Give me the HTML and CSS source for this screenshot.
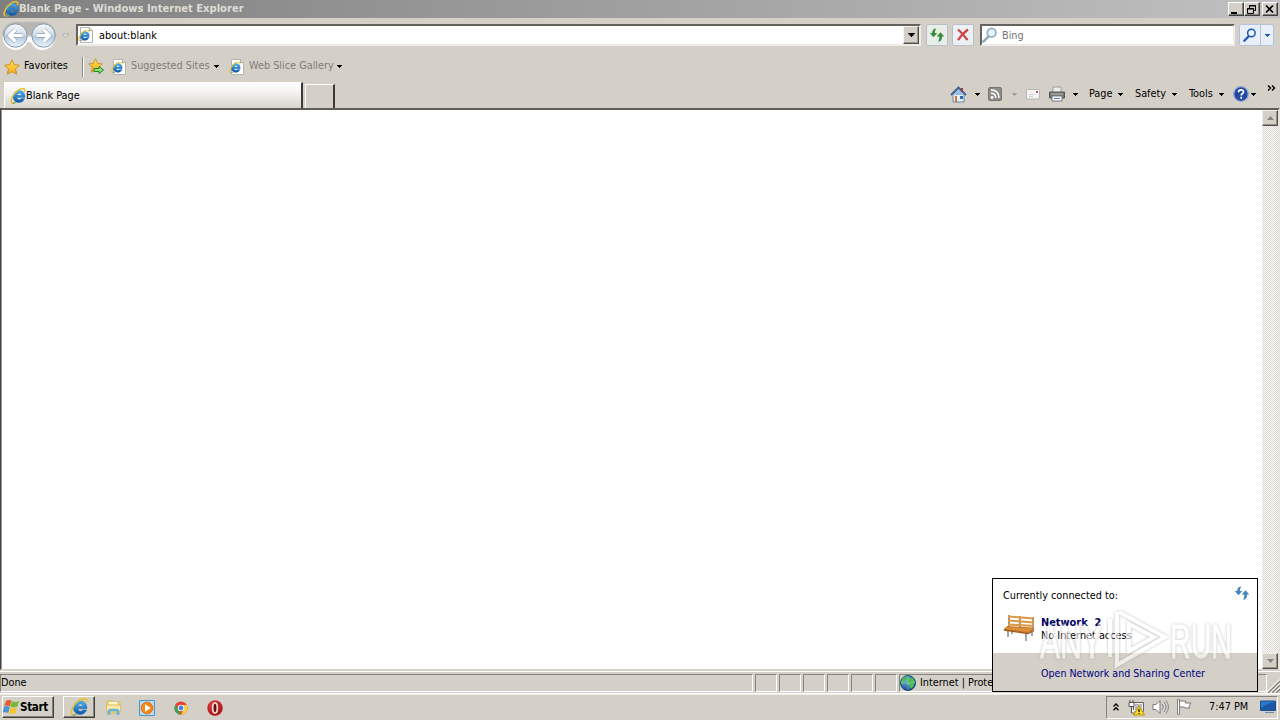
FILE: index.html
```html
<!DOCTYPE html>
<html lang="en">
<head>
<meta charset="utf-8">
<title>Blank Page - Windows Internet Explorer</title>
<link rel="stylesheet" href="styles.css">
</head>
<body>
<svg class="defs" width="0" height="0">
  <defs>
    <linearGradient id="blue" x1="0" y1="0" x2="0" y2="1"><stop offset="0" stop-color="#4bb4f2"/><stop offset="1" stop-color="#0b55b0"/></linearGradient>
    <linearGradient id="orb" x1="0" y1="0" x2="0" y2="1"><stop offset="0" stop-color="#f4f7fa"/><stop offset=".48" stop-color="#d3dde6"/><stop offset=".52" stop-color="#b3c8da"/><stop offset="1" stop-color="#e8f6ff"/></linearGradient>
    <linearGradient id="gold" x1="0" y1="0" x2="0" y2="1"><stop offset="0" stop-color="#ffe95a"/><stop offset="1" stop-color="#f9a51c"/></linearGradient>
    <radialGradient id="red" cx=".4" cy=".3" r=".8"><stop offset="0" stop-color="#e34a48"/><stop offset="1" stop-color="#9d0508"/></radialGradient>
    <radialGradient id="world" cx=".4" cy=".3" r=".8"><stop offset="0" stop-color="#6fb9ee"/><stop offset="1" stop-color="#0b3a86"/></radialGradient>
  </defs>
  <symbol id="ie" viewBox="0 0 16 16">
    <path d="M9.300 2.600c4 0 6.200 3.300 5.700 7H6.900c.2 1.500 1.200 2.100 2.400 2.100 1 0 1.700-.4 2.200-1.100h3.200c-.9 2.600-3 4-5.700 4-3.600 0-5.900-2.500-5.900-5.900 0-3.600 2.600-6.100 6.200-6.100zM7 7.300h4.600c-.1-1.200-1-2-2.300-2-1.200 0-2.100.8-2.300 2z" fill="url(#blue)" fill-rule="evenodd" stroke="#0d4d96" stroke-width=".3"/>
    <path d="M2.300 15C-.600 13.500 2.500 6 7.500 2.600c3-2.100 6.200-2.500 7-1.300.5.800.3 1.700-.2 2.800" fill="none" stroke="#e6c22f" stroke-width="1.500"/>
    <path d="M2.300 15c1 .5 2.500 0 3.800-1.200" fill="none" stroke="#7fa458" stroke-width="1.300"/>
  </symbol>
  <symbol id="iepage" viewBox="0 0 16 16">
    <path d="M2.500.5h9l3 3v12h-12z" fill="#fff" stroke="#b5b3b0"/><path d="M11.500.5v3h3" fill="#ddd" stroke="#a9a9a9"/>
    <svg x="0" y="2.500" width="12" height="12"><use href="#ie"/></svg>
  </symbol>
  <symbol id="star" viewBox="0 0 16 16"><path d="M8 .8l2.200 4.900 5.200.6-3.900 3.600 1.100 5.300L8 12.600l-4.600 2.600 1.100-5.300L.6 6.300l5.200-.6z" fill="url(#gold)" stroke="#c98a1c" stroke-width=".9"/></symbol>
  <symbol id="swap" viewBox="0 0 16 16"><path d="M7.500 1.500C4.500 1.500 3 3.500 3.200 6H.8l3.700 4.200L8.300 6H6c-.2-1.800.2-3 1.500-4.500zM9 15c3-.5 4.300-2.500 4-5.500h2.300L11.500 5.300 7.700 9.500h2.500c.2 2-.1 3.800-1.200 5.500z" fill="currentColor"/></symbol>
  <symbol id="glass" viewBox="0 0 16 16"><path d="M6.500 9.500L1.500 14.500" stroke="currentColor" stroke-width="2.600" stroke-linecap="round"/><circle cx="9.600" cy="5.700" r="4.300" fill="#e8f3fc" stroke="currentColor" stroke-width="1.700"/></symbol>
  <symbol id="down" viewBox="0 0 5 3"><path d="M0 0h5v1H4v1H3v1H2V2H1V1H0z" fill="currentColor"/></symbol>
</svg>

<div class="screen">
  <header class="title">
    <svg class="i16"><use href="#ie"/></svg><span class="cap">Blank Page - Windows Internet Explorer</span>
    <button class="wb"><svg width="14" height="11"><path d="M2 9h6" stroke="#000" stroke-width="2"/></svg></button>
    <button class="wb"><svg width="14" height="11"><path d="M4.500 4V1.500h6v5H9M4 2h7" fill="none" stroke="#000"/><path d="M2.500 4.500h6v5h-6zM2 5h7" fill="none" stroke="#000"/></svg></button>
    <button class="wb close"><svg width="14" height="11"><path d="M3 1.500l7 7M10 1.500l-7 7" stroke="#000" stroke-width="1.700"/></svg></button>
  </header>

  <nav class="address">
    <svg class="orbs" width="72" height="32" viewBox="0 0 72 32">
      <path d="M15 3h28a13.500 13.500 0 0 1 13 13H2A13.500 13.500 0 0 1 15 3z" fill="#b9b7b4"/>
      <path d="M2.500 18a13 13 0 0 0 25 5h3a13 13 0 0 0 25-5z" fill="#fff"/>
      <g fill="url(#orb)" stroke="#8898a8"><circle cx="15.500" cy="16.500" r="11.700"/><circle cx="43.500" cy="16.500" r="11.700"/></g>
      <path d="M15.500 10.500l-6 6 6 6M10 16.500h12.500M43.500 10.500l6 6-6 6M49 16.500H36.500" fill="none" stroke="#8ca3b8" stroke-width="4.400"/>
      <path d="M15.500 10.500l-6 6 6 6M10 16.500h12.500M43.500 10.500l6 6-6 6M49 16.500H36.500" fill="none" stroke="#fff" stroke-width="3.200"/>
      <path d="M62 15h7l-3.500 3.500z" fill="#e4e2dd" stroke="#aaa69e" stroke-width=".8"/>
    </svg>
    <div class="url"><svg class="i16"><use href="#iepage"/></svg><span class="t" style="width:58px">about:blank</span><span class="combo"><svg width="7" height="4"><use href="#down"/></svg></span></div>
    <button class="soft green"><svg class="i16"><use href="#swap"/></svg></button>
    <button class="soft stop"><svg width="14" height="14"><path d="M2 1.500Q6 5 11.500 12M12 1.500Q7 5 2 12" fill="none" stroke="#c9434a" stroke-width="2.200"/></svg></button>
    <div class="search"><svg class="i16"><use href="#glass"/></svg><span>Bing</span></div>
    <div class="go"><span><svg width="14" height="14"><use href="#glass"/></svg></span><span><svg width="5" height="3"><use href="#down"/></svg></span></div>
  </nav>

  <nav class="favs">
    <svg class="i16"><use href="#star"/></svg><span class="t favorites">Favorites</span>
    <i class="rule"></i>
    <svg class="addfav" width="17" height="17" viewBox="0 0 17 17"><svg width="15" height="15"><use href="#star"/></svg><path d="M6 10.500h5V8.500l4.500 3.500-4.500 3.500v-2H6z" fill="#8be070" stroke="#258323"/></svg>
    <svg class="i16 site"><use href="#iepage"/></svg><span class="t dim suggested">Suggested Sites</span><svg class="dn"><use href="#down"/></svg>
    <svg class="i16 slice"><use href="#iepage"/></svg><span class="t dim gallery">Web Slice Gallery</span><svg class="dn"><use href="#down"/></svg>
  </nav>

  <div class="tabs">
    <div class="tab"><svg class="i16"><use href="#ie"/></svg><span>Blank Page</span></div><div class="newtab"></div>
    <div class="commands">
      <svg width="17" height="17" viewBox="0 0 17 17"><path d="M3 8h11v8H3z" fill="#e6eff8" stroke="#6b84a5"/><path d="M1 9l7.500-7.500L16 9" fill="#9bc0e3" stroke="#3d6190" stroke-width="1.800"/><path d="M12 2v4" stroke="#944" stroke-width="2"/><path d="M5 10h2v6H5z" fill="#c67938"/><path d="M10 10h3v3h-3z" fill="#2a69ae"/></svg>
      <svg class="dn c1"><use href="#down"/></svg>
      <svg class="feed" width="14" height="14" viewBox="0 0 14 14"><rect x=".5" y=".5" width="13" height="13" rx="1.500" fill="#8e8d8a" stroke="#77736e"/><circle cx="4" cy="10.500" r="1.400" fill="#fff"/><path d="M3 6.300q4.700 0 4.700 4.700M3 3q8 0 8 8" fill="none" stroke="#fff" stroke-width="1.500"/></svg>
      <svg class="dn c2"><use href="#down"/></svg>
      <svg class="mail" width="14" height="11" viewBox="0 0 14 11"><path d="M.5.500h13v9.500H.5z" fill="#f5f4f4" stroke="#bab6b2"/><path d="M10 2h2v2h-2z" fill="#cf4d68"/><path d="M3 5.500h5M3 7.500h4" stroke="#d3d0d2"/></svg>
      <svg class="print" width="16" height="16" viewBox="0 0 16 16"><path d="M4 1h8v6H4z" fill="#eee" stroke="#999"/><path d="M.5 6h15v6h-15z" fill="#777" stroke="#555"/><path d="M2 8h12" stroke="#bbb"/><path d="M3 10h10v5H3z" fill="#fff" stroke="#777"/><path d="M5 12.500h6" stroke="#4a79c2"/></svg>
      <svg class="dn c3"><use href="#down"/></svg>
      <span class="t page">Page</span><svg class="dn"><use href="#down"/></svg>
      <span class="t safety">Safety</span><svg class="dn"><use href="#down"/></svg>
      <span class="t tools">Tools</span><svg class="dn"><use href="#down"/></svg>
      <svg class="help" width="16" height="16" viewBox="0 0 16 16"><circle cx="8" cy="8" r="7.300" fill="#2449a4" stroke="#8fa8d1" stroke-width="1.300"/><path d="M5.500 6.200C5.500 3 10.700 3.100 10.500 6c-.1 1.500-2.300 1.600-2.300 3.600M8.200 10.700v2" fill="none" stroke="#fff" stroke-width="1.700"/></svg>
      <svg class="dn c4"><use href="#down"/></svg>
      <svg class="more" width="9" height="7"><path d="M1 .5l2.500 2.500L1 5.500M5 .5l2.500 2.500L5 5.500" fill="none" stroke="#000" stroke-width="1.400"/></svg>
    </div>
  </div>

  <main class="view"><div class="scroll"><button><svg width="7" height="4" viewBox="0 0 7 4"><path d="M0 4l3.500-4L7 4z" fill="#85817b"/></svg></button><button><svg width="7" height="4" viewBox="0 0 7 4"><path d="M0 0h7L3.500 4z" fill="#85817b"/></svg></button></div></main>

  <div class="status">
    <div class="pane done">Done</div><div class="pane"></div><div class="pane"></div><div class="pane"></div><div class="pane"></div><div class="pane"></div><div class="pane"></div>
    <div class="pane zone"><svg width="16" height="16" viewBox="0 0 16 16"><circle cx="8" cy="8" r="7.500" fill="url(#world)" stroke="#174b76"/><path d="M2 4q3-4 6-2l-1 3-3 2-1 3-2-1zM9 3l4 0 2 4-2 5-3 2-1-4-2-2 1-3z" fill="#50ba57"/><path d="M8 1v14M1 7q7 3 14 0" fill="none" stroke="#aee0d5" stroke-width=".7" opacity=".6"/></svg><span>Internet | Protected Mode: On</span></div>
    <svg class="grip" width="14" height="14"><path d="M1 14L14 1M5 14l9-9M9 14l5-5" stroke="#fff" stroke-width="2"/><path d="M2 14L14 2M6 14l8-8M10 14l4-4" stroke="#817d77" stroke-width="1.500"/></svg>
  </div>

  <footer class="taskbar">
    <button class="start"><svg width="17" height="16" viewBox="0 0 17 16"><path d="M3 2q3-2 5.500-.3L7 7.300Q4 5.800 1.300 7z" fill="#e65c28"/><path d="M9 2Q12 4 16 2l-1.600 5.500Q11 9 7.500 7.500z" fill="#77b73b"/><path d="M1 7.700q3-1.400 5.800.3L5.200 14Q2.500 12.400-.5 13.800z" fill="#4c94d8"/><path d="M7.400 8.300q3 1.600 6.600.2l-1.500 5.400Q9 16 5.800 14.300z" fill="#f5c431"/></svg><span>Start</span></button>
    <button class="task"><svg width="18" height="18"><use href="#ie"/></svg></button>
    <svg class="folder" width="17" height="17" viewBox="0 0 17 17"><path d="M2 2h6l1 1h6v11H2z" fill="#f4d473" stroke="#d8bb66"/><path d="M4 3h8v3H4z" fill="#fff7d6"/><path d="M1.500 6h14v6h-14z" fill="#ffe99c" stroke="#d9bd6c"/><path d="M4 16v-3.500q0-1.500 1.500-1.500h6q1.500 0 1.500 1.500V16" fill="none" stroke="#61b5df" stroke-width="2.500"/></svg>
    <svg class="media" width="16" height="16" viewBox="0 0 16 16"><path d="M.5.500h15v15H.5z" fill="#b8dcf1" stroke="#5095c4"/><circle cx="8" cy="8" r="5.800" fill="#f58a19" stroke="#e36f10"/><path d="M6 4.200l5.500 3.800L6 11.800z" fill="#fff"/></svg>
    <svg class="chrome" width="14" height="14" viewBox="0 0 16 16"><circle cx="8" cy="8" r="7.500" fill="#e64233"/><path d="M1.500 4.300L8 15.500A7.500 7.500 0 0 1 1.500 4.300z" fill="#34a853"/><path d="M8 4.500h6.600A7.500 7.500 0 0 1 8 15.500l3-5.500z" fill="#fbd034"/><circle cx="8" cy="8" r="3.700" fill="#fff"/><circle cx="8" cy="8" r="2.800" fill="#4285de"/></svg>
    <svg class="opera" width="16" height="16" viewBox="0 0 16 16"><circle cx="8" cy="8" r="7.700" fill="url(#red)"/><ellipse cx="8" cy="8" rx="2.300" ry="5" fill="#6c0b0c" stroke="#f2dede" stroke-width="1.700"/></svg>
    <div class="tray">
      <svg class="chev" width="6" height="8"><path d="M.5 3.500L3 1l2.500 2.500M.5 7.200L3 4.700l2.500 2.500" fill="none" stroke="#000" stroke-width="1.300"/></svg>
      <svg class="net" width="17" height="17" viewBox="0 0 17 17"><path d="M5.500 3.500h10v9h-10z" fill="#eee" stroke="#666"/><path d="M7 5h7v6H7z" fill="#bbb"/><path d="M1 3.500h5v4H1zM2 1v2M5 1v2M3.500 8v6h4" fill="#fff" stroke="#555"/><path d="M11 7l5.500 9h-11z" fill="#ffdb29" stroke="#ba9200"/><path d="M11 10v3M11 14v1" stroke="#000" stroke-width="1.200"/></svg>
      <svg class="sound" width="17" height="16" viewBox="0 0 17 16"><path d="M1 5.500h3l4-4v13l-4-4H1z" fill="#fff" stroke="#777"/><path d="M10 5q2.500 3 0 6M12 3q4 5 0 10M14 1.500q5 6.500 0 13" fill="none" stroke="#888"/></svg>
      <svg class="flag" width="17" height="16" viewBox="0 0 17 16"><path d="M1.500.5h2v15h-2z" fill="#fff" stroke="#777" stroke-width=".9"/><path d="M3.500 2h6v2H15l-2 3.500 1 1.500H9L8 8H3.500z" fill="#fff" stroke="#777"/></svg>
      <span class="clock">7:47 PM</span>
      <svg class="desktop" width="16" height="14" viewBox="0 0 16 14"><path d="M.5 1h15v9.500H.5z" fill="#2c79c8" stroke="#175092"/><path d="M1 8Q8 3 15 2v8H1z" fill="#1c57a5"/><path d="M5 12.500h9" stroke="#6b8aad"/></svg>
    </div>
  </footer>

  <aside class="popup">
    <div class="white"><span class="connected">Currently connected to:</span><svg class="refresh" width="16" height="16"><use href="#swap"/></svg>
      <div class="network"><svg width="34" height="30" viewBox="0 0 34 30"><path d="M5 17v6M23 20v7M9 16v4M29 17v5" stroke="#8b9296" stroke-width="1.600"/><path d="M6 1v14M30 3v13M17 2v12" stroke="#8b5e2b" stroke-width="1.300"/><path d="M5 2.500l26 2M5 6.500l26 2M5 10.500l26 1.500" stroke="#dc9a4b" stroke-width="2.200"/><path d="M4 12.500l25 1.500 2 1.500-6 3-24-3z" fill="#dd9134" stroke="#a96420" stroke-width=".8"/><path d="M1 16l24 3.500 6-3" fill="none" stroke="#a15919" stroke-width="1.300"/></svg><div><b>Network&nbsp; 2</b><span>No Internet access</span></div></div>
    </div>
    <a class="center">Open Network and Sharing Center</a>
    <svg class="watermark" width="212" height="66" viewBox="0 0 212 66">
      <g class="ghost"><text x="6" y="51" textLength="62" lengthAdjust="spacingAndGlyphs">ANY</text><text x="136" y="51" textLength="62" lengthAdjust="spacingAndGlyphs">RUN</text>
      <path d="M76 12v38M85 5l46 25-48 28V5M95 17v27l25-14z"/></g>
    </svg>
  </aside>
</div>
</body>
</html>
```
FILE: styles.css
```css
* { box-sizing: border-box; }
body { margin: 0; background: #d4d0c8; color: #000; font: 10.8px/14px "DejaVu Sans Condensed", "DejaVu Sans", sans-serif; overflow: hidden; }
svg { display: block; flex: none; }
button { font: inherit; padding: 0; margin: 0; color: #000; }
.defs { position: absolute; }
.screen { position: relative; width: 1280px; height: 720px; display: flex; flex-direction: column; background: #d4d0c8; }
.i16 { width: 16px; height: 16px; }
.t { flex: none; white-space: nowrap; }
.dn { width: 5px; height: 3px; }
.title { height: 18px; flex: none; display: flex; align-items: center; padding: 0 2px 0 3px; background: linear-gradient(90deg, #808080, #c0c0c0); }
.cap { flex: 1; color: #dedbd5; font-weight: bold; font-size: 11.1px; white-space: nowrap; }
.wb { width: 16px; height: 14px; background: #d4d0c8; border: 1px solid; border-color: #fff #404040 #404040 #fff; box-shadow: inset -1px -1px #808080; }
.close { margin-left: 2px; }
.address { height: 35px; flex: none; display: flex; align-items: flex-start; }
.orbs { margin-top: 1px; }
.url { margin: 6px 0 0 4px; width: 845px; height: 22px; display: flex; align-items: center; background: #fff; border: 2px solid; border-color: #65625e #eeece7 #eeece7 #65625e; }
.url .t { margin: 1px 0 0 5px; }
.combo { width: 16px; height: 18px; margin-left: auto; display: flex; align-items: center; justify-content: center; background: #d4d0c8; border: 1px solid; border-color: #f4f2ee #504d49 #504d49 #f4f2ee; box-shadow: inset -1px -1px #99958f; }
.soft { width: 22px; height: 22px; margin: 6px 0 0 5px; border: 1px solid #b8bfcb; border-radius: 2px; background: #eceff3; display: flex; align-items: center; justify-content: center; }
.soft + .soft { margin-left: 4px; }
.green { color: #3b8c3e; background: #e7efe8; }
.search { width: 255px; height: 22px; margin: 6px 0 0 6px; display: flex; align-items: center; background: #fff; border: 2px solid; border-color: #65625e #eeece7 #eeece7 #65625e; color: #94adbd; }
.search span { color: #76736f; margin: 1px 0 0 4px; }
.go { width: 35px; height: 22px; display: flex; margin: 6px 0 0 4px; border: 1px solid #b5c3da; border-radius: 2px; background: #e9eff8; color: #1e58b4; }
.go span { display: flex; align-items: center; justify-content: center; width: 20px; }
.go span + span { width: 13px; border-left: 1px solid #b5c3da; }
.favs { height: 27px; flex: none; display: flex; align-items: center; padding-left: 4px; }
.favs .t { margin-top: -1px; }
.favorites { width: 46px; margin-left: 4px; }
.rule { width: 2px; height: 20px; margin: 0 5px 0 12px; border-left: 1px solid #8b8882; border-right: 1px solid #fff; }
.addfav { margin-left: -1px; }
.site { margin-left: 6px; }
.dim { color: #817d78; }
.suggested { width: 79px; margin-left: 4px; }
.suggested + .dn { margin-left: 4px; }
.slice { margin-left: 10px; }
.gallery { width: 83px; margin-left: 4px; }
.gallery + .dn { margin-left: 5px; }
.tabs { height: 28px; flex: none; display: flex; align-items: flex-end; padding-left: 4px; }
.tab { width: 299px; height: 26px; display: flex; align-items: center; padding: 1px 0 0 5px; border: 1px solid #fff; border-right: 2px solid #3c3b39; border-bottom: 0; background: linear-gradient(#fff, #f2f1ef 40%, #d8d4cd); }
.tab span { margin-left: 0; }
.newtab { width: 30px; height: 24px; margin-left: 2px; border-left: 1px solid #fff; border-top: 1px solid #fff; border-right: 2px solid #3c3b39; }
.commands { height: 28px; width: 330px; margin: 0 0 0 auto; display: flex; align-items: center; }
.c1 { margin-left: 8px; }
.feed { margin-left: 8px; }
.c2 { margin-left: 10px; color: #a5a099; }
.mail { margin-left: 9px; }
.print { margin-left: 9px; }
.c3 { margin-left: 8px; }
.page { width: 24px; margin-left: 11px; }
.page + .dn { margin-left: 5px; }
.safety { width: 33px; margin-left: 12px; }
.safety + .dn { margin-left: 4px; }
.tools { width: 26px; margin-left: 12px; }
.tools + .dn { margin-left: 4px; }
.help { margin-left: 9px; }
.c4 { margin-left: 2px; }
.more { align-self: flex-start; margin: 5px 0 0 11px; }
.view { height: 562px; flex: none; background: #fff; border: solid; border-width: 2px 2px 1px 1px; border-color: #605d59 #e8e5df #d4d0c8 #45423f; box-shadow: inset 1px 0 #9a9792; display: flex; justify-content: flex-end; padding-left: 1px; }
.scroll { width: 16px; display: flex; flex-direction: column; justify-content: space-between; background: repeating-conic-gradient(#fff 0% 25%, #d9d5ce 0% 50%) 0 0 / 2px 2px; }
.scroll button { width: 16px; height: 16px; display: flex; align-items: center; justify-content: center; background: #d4d0c8; border: 1px solid; border-color: #f1eee8 #504d49 #504d49 #f1eee8; box-shadow: inset -1px -1px #96928c; }
.status { height: 23px; flex: none; display: flex; margin-top: 1px; padding-top: 2px; border-top: 1px solid #fff; border-bottom: 1px solid #fff; gap: 2px; }
.pane { width: 22px; height: 18px; flex: none; border: 1px solid; border-color: #87837d #fff #fff #87837d; }
.done { width: 753px; padding-top: 1px; }
.zone { width: 368px; display: flex; align-items: center; gap: 4px; white-space: nowrap; }
.grip { align-self: flex-end; margin-left: -3px; }
.taskbar { height: 26px; flex: none; display: flex; align-items: center; padding: 0 2px; border-top: 1px solid #eeeae4; }
.start, .task { height: 22px; display: flex; align-items: center; margin-top: -1px; background: #d4d0c8; border: 1px solid; border-color: #fff #403e3b #403e3b #fff; box-shadow: inset -1px -1px #85817a; }
.start { width: 52px; font-size: 11.7px; font-weight: bold; padding-left: 0; letter-spacing: -.4px; }
.task { width: 32px; margin-left: 9px; justify-content: center; }
.folder { margin-left: 10px; }
.media { margin-left: 17px; }
.chrome { margin-left: 19px; }
.opera { margin-left: 19px; }
.tray { width: 172px; height: 23px; margin: -1px 0 0 auto; display: flex; align-items: center; border: 1px solid; border-color: #85817a #fff #fff #85817a; }
.chev { margin-left: 6px; }
.net { margin-left: 9px; }
.sound { margin-left: 7px; }
.flag { margin-left: 7px; }
.clock { width: 41px; margin-left: 16px; white-space: nowrap; }
.desktop { margin-left: 10px; }
.popup { position: absolute; left: 992px; top: 578px; width: 266px; height: 114px; border: 1px solid #000; display: flex; flex-direction: column; background: #fff; }
.white { height: 74px; padding: 10px 7px 0 10px; display: grid; grid-template-columns: 1fr 16px; grid-template-rows: 25px 34px; }
.refresh { color: #4386be; margin-top: -4px; }
.network { grid-column: 1 / 3; display: flex; gap: 4px; white-space: nowrap; }
.network b, .network span { display: block; line-height: 13px; }
.network b { color: #000066; margin-top: 2px; font-size: 10.9px; }
.center { height: 38px; padding: 13px 0 0 48px; background: #d4d0c8; color: #000080; white-space: nowrap; font-size: 10.6px; }
.watermark { position: absolute; left: 41px; top: 28px; overflow: visible; }
.ghost { opacity: .6; filter: drop-shadow(0 0 1.5px #999); }
.ghost text { font: 48px "Liberation Sans", sans-serif; fill: #fff; stroke: #fff; stroke-width: 1; }
.ghost path { fill: none; stroke: #fff; stroke-width: 4; }
```
